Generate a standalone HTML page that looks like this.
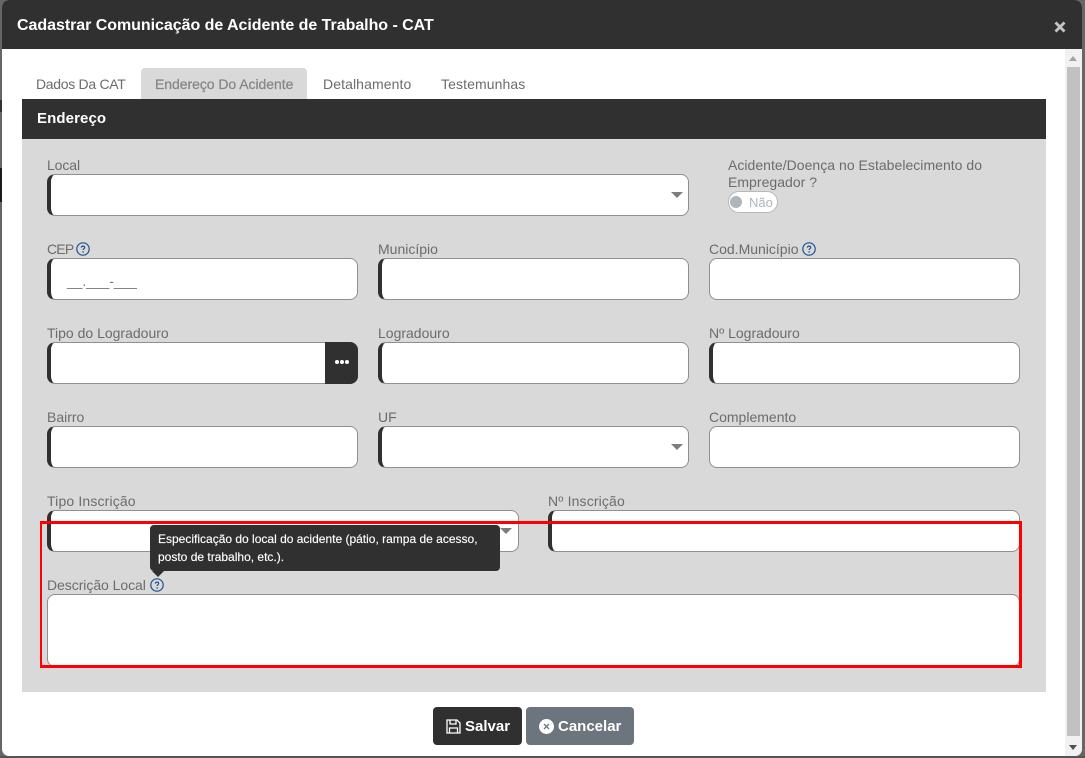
<!DOCTYPE html>
<html lang="pt-BR"><head><meta charset="utf-8"><title>CAT</title>
<style>
*{box-sizing:border-box}
html,body{margin:0;padding:0;width:1085px;height:758px;overflow:hidden;background:#666;font-family:"Liberation Sans",Arial,sans-serif}
.a{position:absolute}
.t{position:absolute;white-space:nowrap;font-size:14px;line-height:17px;color:#6c6c6c}
.f{position:absolute;background:#fff;border:1px solid #8f8f8f;border-radius:8px;height:42px}
.m{border-left:4px solid #303030}
.c{position:absolute;width:0;height:0;border-left:6px solid transparent;border-right:6px solid transparent;border-top:6px solid #7d7d7d}
.q{position:absolute;width:14px;height:14px}
</style></head><body>
<svg width="0" height="0" style="position:absolute"><defs>
<symbol id="q" viewBox="0 0 14 14"><circle cx="7" cy="7" r="6.2" fill="none" stroke="#1f4f8f" stroke-width="1.2"/><path d="M5.3 5.6C5.4 4.6 6.1 4.1 7 4.1c1 0 1.7.6 1.7 1.4 0 1.2-1.6 1.2-1.6 2.5" fill="none" stroke="#1f4f8f" stroke-width="1.2"/><circle cx="7.1" cy="9.9" r=".8" fill="#1f4f8f"/></symbol>
</defs></svg>

<div class="a" style="left:0;top:100px;width:2px;height:12px;background:#333"></div>
<div class="a" style="left:0;top:168px;width:2px;height:34px;background:#1a1a1a"></div>
<div class="a" style="left:0;top:756px;width:1085px;height:2px;background:#555"></div>

<div class="a" style="left:2px;top:0;width:1080px;height:756px;background:#fff;border-radius:7px;overflow:hidden">
  <div class="a" style="left:0;top:0;width:1080px;height:49px;background:#303030"></div>
  <div class="a" style="left:1063px;top:49px;width:17px;height:707px;background:#f1f1f1"></div>
  <div class="a" style="left:1065px;top:67px;width:13px;height:669px;background:#c1c1c1"></div>
  <div class="a" style="left:1067px;top:56px;width:0;height:0;border-left:4px solid transparent;border-right:4px solid transparent;border-bottom:5px solid #a3a3a3"></div>
  <div class="a" style="left:1067px;top:745px;width:0;height:0;border-left:4px solid transparent;border-right:4px solid transparent;border-top:5px solid #505050"></div>
</div>

<div class="t" style="left:17px;top:16px;font-size:16px;line-height:20px;font-weight:bold;color:#fff;letter-spacing:-.04px">Cadastrar Comunicação de Acidente de Trabalho - CAT</div>
<svg class="a" style="left:1054px;top:21px" width="12" height="12" viewBox="0 0 12 12"><path d="M1.5 1.5L10.5 10.5M10.5 1.5L1.5 10.5" stroke="#c4c4c4" stroke-width="2.8"/></svg>

<div class="a" style="left:141px;top:68px;width:166px;height:31px;background:#d9d9d9;border-radius:4px 4px 0 0"></div>
<div class="t" style="left:36px;top:76px;letter-spacing:-.3px">Dados Da CAT</div>
<div class="t" style="left:155px;top:76px;color:#868686;-webkit-text-stroke:.25px #868686;letter-spacing:-.05px">Endereço Do Acidente</div>
<div class="t" style="left:323px;top:76px;letter-spacing:.1px">Detalhamento</div>
<div class="t" style="left:441px;top:76px;letter-spacing:.1px">Testemunhas</div>

<div class="a" style="left:22px;top:99px;width:1024px;height:593px;background:#d9d9d9"></div>
<div class="a" style="left:22px;top:99px;width:1024px;height:40px;background:#303030"></div>
<div class="t" style="left:37px;top:110px;font-size:15px;font-weight:bold;color:#fff;letter-spacing:.1px">Endereço</div>

<!-- Row 1 -->
<div class="t" style="left:47px;top:157px;letter-spacing:-.1px">Local</div>
<div class="f m" style="left:47px;top:174px;width:642px"></div>
<div class="c" style="left:671px;top:192px"></div>
<div class="t" style="left:728px;top:157px;letter-spacing:.03px">Acidente/Doença no Estabelecimento do</div>
<div class="t" style="left:728px;top:174px;letter-spacing:.03px">Empregador ?</div>
<div class="a" style="left:728px;top:191px;width:50px;height:22px;background:#fff;border:1px solid #b5b9bd;border-radius:11px"></div>
<div class="a" style="left:730px;top:196px;width:12px;height:12px;background:#adb5bd;border-radius:50%"></div>
<div class="t" style="left:749px;top:194px;font-size:13px;color:#adb5bd">Não</div>

<!-- Row 2 -->
<div class="t" style="left:47px;top:241px;letter-spacing:-.8px">CEP</div>
<svg class="q" style="left:76px;top:242px"><use href="#q"/></svg>
<div class="f m" style="left:47px;top:258px;width:311px"></div>
<div class="t" style="left:67px;top:273px;color:#777;font-size:14px;letter-spacing:-.1px">__.___-___</div>
<div class="t" style="left:378px;top:241px">Município</div>
<div class="f m" style="left:378px;top:258px;width:311px"></div>
<div class="t" style="left:709px;top:241px">Cod.Município</div>
<svg class="q" style="left:802px;top:242px"><use href="#q"/></svg>
<div class="f" style="left:709px;top:258px;width:311px"></div>

<!-- Row 3 -->
<div class="t" style="left:47px;top:325px">Tipo do Logradouro</div>
<div class="f m" style="left:47px;top:342px;width:311px"></div>
<div class="a" style="left:325px;top:342px;width:33px;height:42px;background:#303030;border-radius:0 8px 8px 0"></div>
<div class="a" style="left:335px;top:360px;width:4px;height:4px;background:#fff;border-radius:50%"></div>
<div class="a" style="left:340px;top:360px;width:4px;height:4px;background:#fff;border-radius:50%"></div>
<div class="a" style="left:345px;top:360px;width:4px;height:4px;background:#fff;border-radius:50%"></div>
<div class="t" style="left:378px;top:325px">Logradouro</div>
<div class="f m" style="left:378px;top:342px;width:311px"></div>
<div class="t" style="left:709px;top:325px">Nº Logradouro</div>
<div class="f m" style="left:709px;top:342px;width:311px"></div>

<!-- Row 4 -->
<div class="t" style="left:47px;top:409px">Bairro</div>
<div class="f m" style="left:47px;top:426px;width:311px"></div>
<div class="t" style="left:378px;top:409px">UF</div>
<div class="f m" style="left:378px;top:426px;width:311px"></div>
<div class="c" style="left:671px;top:444px"></div>
<div class="t" style="left:709px;top:409px">Complemento</div>
<div class="f" style="left:709px;top:426px;width:311px"></div>

<!-- Row 5 -->
<div class="t" style="left:47px;top:493px;letter-spacing:.15px">Tipo Inscrição</div>
<div class="f m" style="left:47px;top:510px;width:472px"></div>
<div class="c" style="left:500px;top:528px"></div>
<div class="t" style="left:548px;top:493px;letter-spacing:.15px">Nº Inscrição</div>
<div class="f m" style="left:548px;top:510px;width:472px"></div>

<!-- Row 6 -->
<div class="t" style="left:47px;top:577px;letter-spacing:-.05px">Descrição Local</div>
<svg class="q" style="left:150px;top:578px"><use href="#q"/></svg>
<div class="f" style="left:47px;top:594px;width:973px;height:73px"></div>

<!-- Red highlight -->
<div class="a" style="left:40px;top:521px;width:982px;height:147px;border:3px solid #f00;border-left-width:2px"></div>

<!-- Tooltip -->
<div class="a" style="left:150px;top:525px;width:350px;height:46px;background:#303030;border-radius:4px"></div>
<div class="a" style="left:152px;top:571px;width:0;height:0;border-left:6px solid transparent;border-right:6px solid transparent;border-top:6px solid #303030"></div>
<div class="t" style="left:158px;top:530px;font-size:12px;line-height:18px;color:#fff;-webkit-text-stroke:.15px #fff">Especificação do local do acidente (pátio, rampa de acesso,<br>posto de trabalho, etc.).</div>

<!-- Buttons -->
<div class="a" style="left:433px;top:707px;width:89px;height:38px;background:#303030;border-radius:4px"></div>
<svg class="a" style="left:446px;top:719px" width="15" height="15" viewBox="0 0 15 15"><path d="M1 1H11L14 4V14H1Z" fill="none" stroke="#fff" stroke-width="1.3"/><path d="M4 1.5V5H10V1.5M3.5 14V9H11.5V14" fill="none" stroke="#fff" stroke-width="1.3"/></svg>
<div class="t" style="left:465px;top:718px;font-size:15px;font-weight:bold;color:#fff">Salvar</div>
<div class="a" style="left:526px;top:707px;width:108px;height:38px;background:#6c757d;border-radius:4px"></div>
<svg class="a" style="left:539px;top:719px" width="15" height="15" viewBox="0 0 15 15"><circle cx="7.5" cy="7.5" r="7.5" fill="#fff"/><path d="M5 5L10 10M10 5L5 10" stroke="#6c757d" stroke-width="1.3"/></svg>
<div class="t" style="left:558px;top:718px;font-size:15px;font-weight:bold;color:#fff">Cancelar</div>
</body></html>
